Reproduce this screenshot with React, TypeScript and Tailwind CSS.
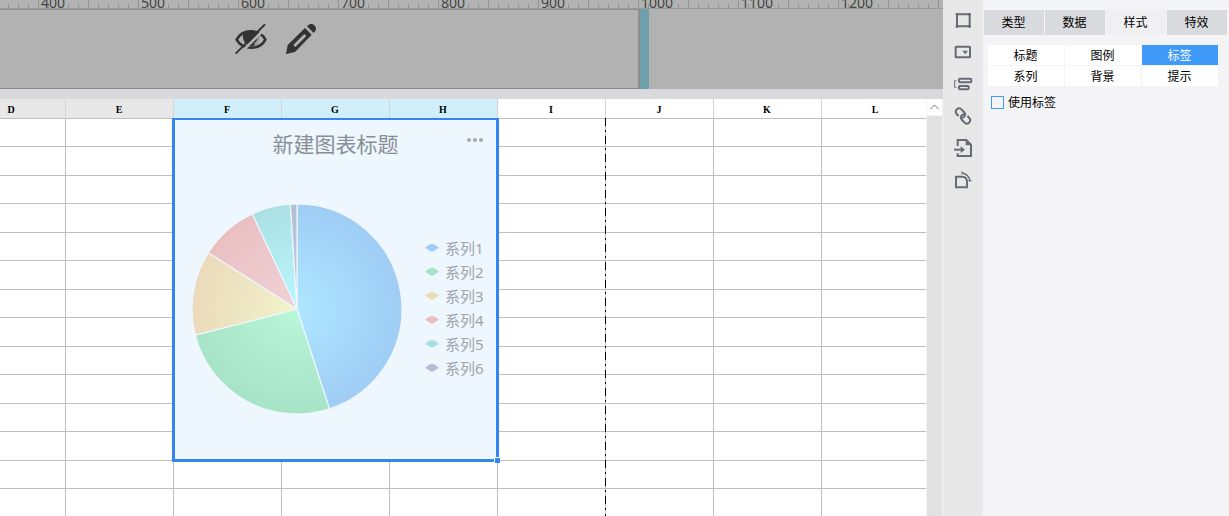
import React from "react";

const RULER_LABELS = [400, 500, 600, 700, 800, 900, 1000, 1100, 1200];
const COLUMNS = ["D", "E", "F", "G", "H", "I", "J", "K", "L"];
const ROW_COUNT = 14;

const SERIES = [
  { name: "系列1", share: 45, inner: "#aee6ff", outer: "#9fcdf5" },
  { name: "系列2", share: 26, inner: "#b9f7da", outer: "#a7e3c6" },
  { name: "系列3", share: 13, inner: "#f1f3ca", outer: "#ebdabb" },
  { name: "系列4", share: 9, inner: "#efd2d5", outer: "#eabfc2" },
  { name: "系列5", share: 6, inner: "#b9f8ff", outer: "#abe0e3" },
  { name: "系列6", share: 1, inner: "#bccde3", outer: "#b5bdd6" },
];

const TABS = ["类型", "数据", "样式", "特效"];
const SECTIONS = ["标题", "图例", "标签", "系列", "背景", "提示"];

function columnColor(name: string) {
  if (name === "D" || name === "E") return "bg-[#e8e8e8]";
  if (name === "F" || name === "G" || name === "H") return "bg-[#d0effb]";
  return "bg-white";
}

function Ruler() {
  return (
    <div className="flex h-[9px] shrink-0 items-end overflow-hidden border-b border-[#999] bg-[#b2b2b2] bg-[linear-gradient(to_right,#939393_1px,transparent_1px),linear-gradient(to_right,#939393_1px,transparent_1px)] bg-[size:50px_8px,10px_4px] bg-[position:38px_0px,8px_4px] bg-repeat-x pl-[38px]">
      {RULER_LABELS.map((n) => (
        <span key={n} className="w-[100px] shrink-0 pl-[3px] text-[14px] leading-[10px] text-[#444]">
          {n}
        </span>
      ))}
    </div>
  );
}

function HiddenIcon() {
  return (
    <svg width="32" height="31" viewBox="0 0 96 93" fill="none" aria-hidden="true">
      <path d="M5 47C22 14 74 14 91 47C75 79 22 79 5 47Z" stroke="#333" strokeWidth="8" />
      <path d="M25 27C38 17 60 17 72 27C76 46 68 64 48 67C30 64 20 46 25 27Z" fill="#333" />
      <path d="M69 37Q71 54 58 60" stroke="#b2b2b2" strokeWidth="4" />
      <path d="M96 8L14 90" stroke="#b2b2b2" strokeWidth="8" />
      <path d="M90 1L2 89" stroke="#333" strokeWidth="6" />
    </svg>
  );
}

function PencilIcon() {
  return (
    <svg width="30" height="30" viewBox="0 0 90 90" aria-hidden="true">
      <path d="M57 12L77 32L27 84L0 90L5 63Z" fill="#333" />
      <path d="M63 7Q75 -6 85 4Q96 14 83 27Z" fill="#333" />
      <path d="M55 30L61 36L28 69L22 63Z" fill="#b2b2b2" />
    </svg>
  );
}

function ReportCanvas() {
  return (
    <div className="flex h-[80px] shrink-0 bg-[#b2b2b2]">
      <div className="flex w-[640px] shrink-0 items-start gap-[19px] border-y border-r-2 border-[#8e8e8e] pt-[14px] pl-[235px]">
        <button type="button" aria-label="隐藏">
          <HiddenIcon />
        </button>
        <button type="button" aria-label="编辑">
          <PencilIcon />
        </button>
      </div>
      <div className="w-[9px] shrink-0 bg-[#6f9fab]" />
    </div>
  );
}

function slicePath(start: number, end: number) {
  const point = (share: number) => {
    const angle = (share / 100) * Math.PI * 2;
    return `${105 + 105 * Math.sin(angle)} ${105 - 105 * Math.cos(angle)}`;
  };
  return `M105 105L${point(start)}A105 105 0 0 1 ${point(end)}Z`;
}

function Pie() {
  let total = 0;
  return (
    <svg className="shrink-0" width="210" height="210" viewBox="0 0 210 210" role="img" aria-label="新建图表标题">
      <defs>
        {SERIES.map((s, i) => (
          <radialGradient key={s.name} id={`slice-${i}`} gradientUnits="userSpaceOnUse" cx="105" cy="105" r="105">
            <stop offset="0" stopColor={s.inner} />
            <stop offset="1" stopColor={s.outer} />
          </radialGradient>
        ))}
      </defs>
      {SERIES.map((s, i) => {
        const start = total;
        total += s.share;
        return (
          <path key={s.name} d={slicePath(start, total)} fill={`url(#slice-${i})`} stroke="#eef6fe" strokeWidth="1.2" strokeLinejoin="bevel" />
        );
      })}
    </svg>
  );
}

function Chart() {
  return (
    <div className="absolute top-[19px] left-[172px] h-[344px] w-[327px] border-3 border-t-2 border-[#3385f0] bg-[#eef6fe]">
      <h2 className="pt-[12px] text-center text-[21px] leading-[24px] text-[#888e96]">新建图表标题</h2>
      <button type="button" aria-label="更多" className="absolute top-[18px] right-[13px] flex gap-[2px]">
        <i className="size-1 rounded-full bg-[#a5abb3]" />
        <i className="size-1 rounded-full bg-[#a5abb3]" />
        <i className="size-1 rounded-full bg-[#a5abb3]" />
      </button>
      <div className="mt-[48px] flex items-center pl-[17px]">
        <Pie />
        <ul className="pb-[2px] pl-[23px]">
          {SERIES.map((s) => (
            <li key={s.name} className="flex h-6 items-center gap-[6px] text-[15px] leading-6 text-[#9fa5ad]">
              <svg width="14" height="8" viewBox="0 0 14 8" aria-hidden="true">
                <path d="M0 3.8L3.500 1Q7 -0.800 10.500 1L14 3.800L7 8Z" fill={s.outer} />
              </svg>
              {s.name}
            </li>
          ))}
        </ul>
      </div>
      <div className="absolute -right-1 -bottom-1 size-[6px] border-t border-l border-[#eef6fe] bg-[#3385f0]" />
    </div>
  );
}

function Sheet() {
  return (
    <div className="flex min-h-0 flex-1 overflow-hidden bg-white">
      <div className="relative min-w-0 flex-1 overflow-hidden">
        <table className="-ml-[42px] w-[972px] table-fixed border-separate border-spacing-0">
          <thead>
            <tr className="h-5">
              {COLUMNS.map((c) => (
                <th
                  key={c}
                  className={`border-r border-b border-r-[#d5d5d5] border-b-[#bfbfbf] p-0 pt-[3px] pr-px text-center font-['Liberation_Serif',serif] text-[10px] leading-4 font-bold text-black ${columnColor(c)}`}
                >
                  {c}
                </th>
              ))}
            </tr>
          </thead>
          <tbody>
            {Array.from({ length: ROW_COUNT }, (_, r) => (
              <tr key={r} className={r % 2 === 0 ? "h-[28px]" : "h-[29px]"}>
                {COLUMNS.map((c) => (
                  <td key={c} className="border-r border-b border-[#bfbfbf] p-0" />
                ))}
              </tr>
            ))}
          </tbody>
        </table>
        <div className="absolute top-[19px] bottom-0 left-[605px] w-px bg-[repeating-linear-gradient(to_bottom,#000_0px,#000_8px,#bfbfbf_8px,#bfbfbf_12px,#000_12px,#000_14px,#bfbfbf_14px,#bfbfbf_18px)]" />
        <Chart />
      </div>
      <div className="flex w-[17px] shrink-0 flex-col border-x border-[#f3f3f3] bg-[#e1e1e1]">
        <button type="button" aria-label="向上滚动" className="flex h-[17px] items-center justify-center border-b border-[#f3f3f3] bg-white">
          <svg width="9" height="6" viewBox="0 0 9 6" fill="none" stroke="#777" aria-hidden="true">
            <path d="M.5 5L4.500 1L8.500 5" />
          </svg>
        </button>
      </div>
    </div>
  );
}

const TOOLS = [
  {
    name: "边框",
    art: (
      <>
        <path d="M12 13H50V49H12Z" />
        <path d="M8 9h7v7h-7zM46 9h7v7h-7zM8 46h7v7h-7zM46 46h7v7h-7z" fill="#666b75" stroke="none" />
      </>
    ),
  },
  {
    name: "下拉框",
    art: (
      <>
        <rect x="8" y="14" width="43" height="32" rx="2" />
        <path d="M28 26H45L36.500 37Z" fill="#666b75" stroke="none" />
      </>
    ),
  },
  {
    name: "对齐",
    art: (
      <>
        <path d="M10 20H5V40H10" strokeWidth="3" />
        <rect x="18" y="14" width="37" height="11" rx="3" />
        <rect x="18" y="36" width="29" height="10" rx="3" />
      </>
    ),
  },
  {
    name: "链接",
    art: (
      <g transform="rotate(48 30 30)">
        <path d="M21 40H13Q3 40 3 30Q3 20 13 20H24Q34 20 34 30Q34 34 31 37" />
        <path d="M39 20H47Q57 20 57 30Q57 40 47 40H36Q26 40 26 30Q26 26 29 23" />
      </g>
    ),
  },
  {
    name: "导入",
    art: (
      <>
        <path d="M14 24V6H40L54 20V54H14V46" />
        <path d="M38 6L54 22H38Z" fill="#666b75" stroke="none" />
        <path d="M3 35H30" />
        <path d="M23 25L36 35L23 45Z" fill="#666b75" stroke="none" />
      </>
    ),
  },
  {
    name: "旋转",
    art: (
      <>
        <path d="M9 20H28Q41 21 42 34V52H9Z" />
        <path d="M28 9Q48 13 51 34" strokeWidth="4" />
        <path d="M27 4V14M46 32H56" strokeWidth="3" />
      </>
    ),
  },
];

function Toolbar() {
  return (
    <div className="flex w-10 shrink-0 flex-col items-center gap-3 bg-[#e8e8e8] pt-[10px]">
      {TOOLS.map((t) => (
        <button key={t.name} type="button" aria-label={t.name}>
          <svg width="20" height="20" viewBox="0 0 60 60" fill="none" stroke="#666b75" strokeWidth="6" aria-hidden="true">
            {t.art}
          </svg>
        </button>
      ))}
    </div>
  );
}

function PropertyPanel() {
  return (
    <aside className="w-[246px] shrink-0 bg-[#f4f4f7] pt-[10px] pr-[2px] pl-px text-[12px] text-black">
      <div role="tablist" className="grid grid-cols-4 gap-px">
        {TABS.map((t) => (
          <button
            key={t}
            type="button"
            role="tab"
            aria-selected={t === "样式"}
            className={`h-[25px] pr-px ${t === "样式" ? "bg-[#f0f0f2]" : "bg-[#d9dadd]"}`}
          >
            {t}
          </button>
        ))}
      </div>
      <div className="mt-[10px] mr-[9px] ml-1 grid grid-cols-3 gap-px">
        {SECTIONS.map((s) => (
          <button key={s} type="button" className={`h-5 pt-[2px] pr-px leading-[18px] ${s === "标签" ? "bg-[#409bf8] text-white" : "bg-white"}`}>
            {s}
          </button>
        ))}
      </div>
      <label className="mt-[6px] ml-[7px] flex items-center gap-1">
        <input type="checkbox" className="size-[13px] appearance-none border border-[#409bf8] bg-[#f4f4f7]" />
        <span className="pt-[2px] leading-[18px]">使用标签</span>
      </label>
    </aside>
  );
}

export default function App() {
  return (
    <div className="flex h-screen overflow-hidden bg-[#d9d9dc] font-['Noto_Sans','Noto_Sans_CJK_SC',sans-serif]">
      <main className="flex min-w-0 flex-1 flex-col overflow-hidden">
        <Ruler />
        <ReportCanvas />
        <div className="h-[10px] shrink-0" />
        <Sheet />
      </main>
      <Toolbar />
      <PropertyPanel />
    </div>
  );
}
